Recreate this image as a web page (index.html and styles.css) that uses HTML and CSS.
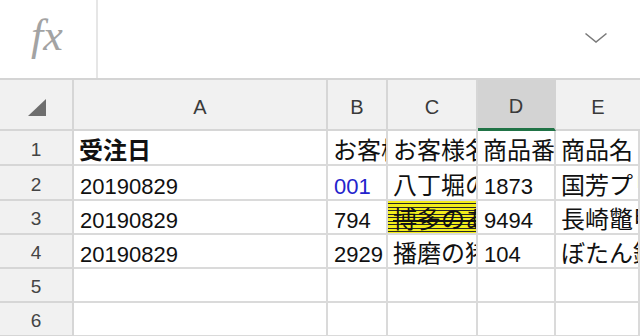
FILE: index.html
```html
<!DOCTYPE html>
<html lang="ja">
<head>
<meta charset="utf-8">
<link rel="stylesheet" href="styles.css">
</head>
<body>
<div class="app">
  <div class="formula-bar">
    <div class="fx-box"><span class="fx">fx</span></div>
    <div class="formula-input">
      <svg class="chevron" width="24" height="12" viewBox="0 0 24 12"><polyline points="1.5,1.5 12,10 22.5,1.5" fill="none" stroke="#7a7a7a" stroke-width="1.6"/></svg>
    </div>
  </div>
  <div class="sheet">
    <div class="hdr corner"><svg width="18" height="17" viewBox="0 0 18 17"><polygon points="18,0 18,17 0,17" fill="#6e6e6e"/></svg></div>
    <div class="hdr col">A</div>
    <div class="hdr col">B</div>
    <div class="hdr col">C</div>
    <div class="hdr col selected">D</div>
    <div class="hdr col last">E</div>

    <div class="hdr row">1</div>
    <div class="cell jp bold">受注日</div>
    <div class="cell jp">お客様番号</div>
    <div class="cell jp">お客様名</div>
    <div class="cell jp">商品番号</div>
    <div class="cell jp">商品名</div>

    <div class="hdr row">2</div>
    <div class="cell">20190829</div>
    <div class="cell blue">001</div>
    <div class="cell jp">八丁堀の江戸屋</div>
    <div class="cell">1873</div>
    <div class="cell jp">国芳プリント</div>

    <div class="hdr row">3</div>
    <div class="cell">20190829</div>
    <div class="cell">794</div>
    <div class="cell jp striped"><span class="strike">博多のあまおう</span></div>
    <div class="cell">9494</div>
    <div class="cell jp">長崎鼈甲細工</div>

    <div class="hdr row">4</div>
    <div class="cell">20190829</div>
    <div class="cell">2929</div>
    <div class="cell jp">播磨の猪肉</div>
    <div class="cell">104</div>
    <div class="cell jp">ぼたん鍋</div>

    <div class="hdr row">5</div>
    <div class="cell"></div>
    <div class="cell"></div>
    <div class="cell"></div>
    <div class="cell"></div>
    <div class="cell"></div>

    <div class="hdr row">6</div>
    <div class="cell"></div>
    <div class="cell"></div>
    <div class="cell"></div>
    <div class="cell"></div>
    <div class="cell"></div>
  </div>
</div>
</body>
</html>
```

FILE: styles.css
```css
* { box-sizing: border-box; }
html, body {
  margin: 0;
  padding: 0;
  background: #ffffff;
}
body {
  width: 640px;
  height: 336px;
  overflow: hidden;
  font-family: "Liberation Sans", "Noto Sans CJK JP", sans-serif;
}
.app {
  width: 640px;
  overflow: hidden;
}
.formula-bar {
  display: flex;
  height: 80px;
  border-bottom: 2px solid #d4d4d4;
  background: #ffffff;
}
.fx-box {
  width: 98px;
  flex: none;
  border-right: 2px solid #e6e6e6;
  display: flex;
  align-items: center;
  justify-content: center;
}
.fx {
  font-family: "Liberation Serif", "DejaVu Serif", serif;
  font-style: italic;
  font-size: 44px;
  color: #a3a3a3;
  line-height: 1;
  margin-top: -6px;
  margin-right: 2px;
}
.formula-input {
  flex: 1;
  display: flex;
  align-items: center;
  justify-content: flex-end;
  padding-right: 32px;
  padding-bottom: 2px;
}
.sheet {
  display: grid;
  grid-template-columns: 74px 254px 60px 90px 78px 84px;
  grid-template-rows: 51px 35px 35px 34px 34px 34px 34px;
  width: 640px;
}
.hdr {
  background: #f1f1f1;
  border-right: 2px solid #d6d6d6;
  border-bottom: 2px solid #d6d6d6;
  color: #3a3a3a;
  font-size: 20px;
  display: flex;
  align-items: center;
  justify-content: center;
}
.hdr.last {
  border-right: none;
}
.corner {
  padding-top: 5px;
  padding-left: 2px;
}
.col {
  padding-top: 5px;
}
.col.selected {
  background: #d3d3d3;
  border-right-color: #d3d3d3;
  border-bottom: 3px solid #217346;
}
.row {
  font-size: 19px;
  color: #444444;
  padding-top: 4px;
}
.cell {
  border-right: 2px solid #dadada;
  border-bottom: 2px solid #dadada;
  font-size: 22px;
  line-height: 22px;
  color: #111111;
  white-space: nowrap;
  overflow: hidden;
  padding-left: 6px;
  display: flex;
  align-items: flex-end;
  padding-bottom: 1px;
}
.cell.jp {
  font-size: 24px;
  line-height: 24px;
  padding-left: 5px;
}
.bold {
  font-weight: bold;
}
.blue {
  color: #2323cc;
}
.striped {
  background: repeating-linear-gradient(to bottom, #f3ee1c 0px, #f3ee1c 2.3px, #262626 2.3px, #262626 3.5px);
}
.strike {
  text-decoration: line-through;
  text-decoration-thickness: 2px;
}
```
